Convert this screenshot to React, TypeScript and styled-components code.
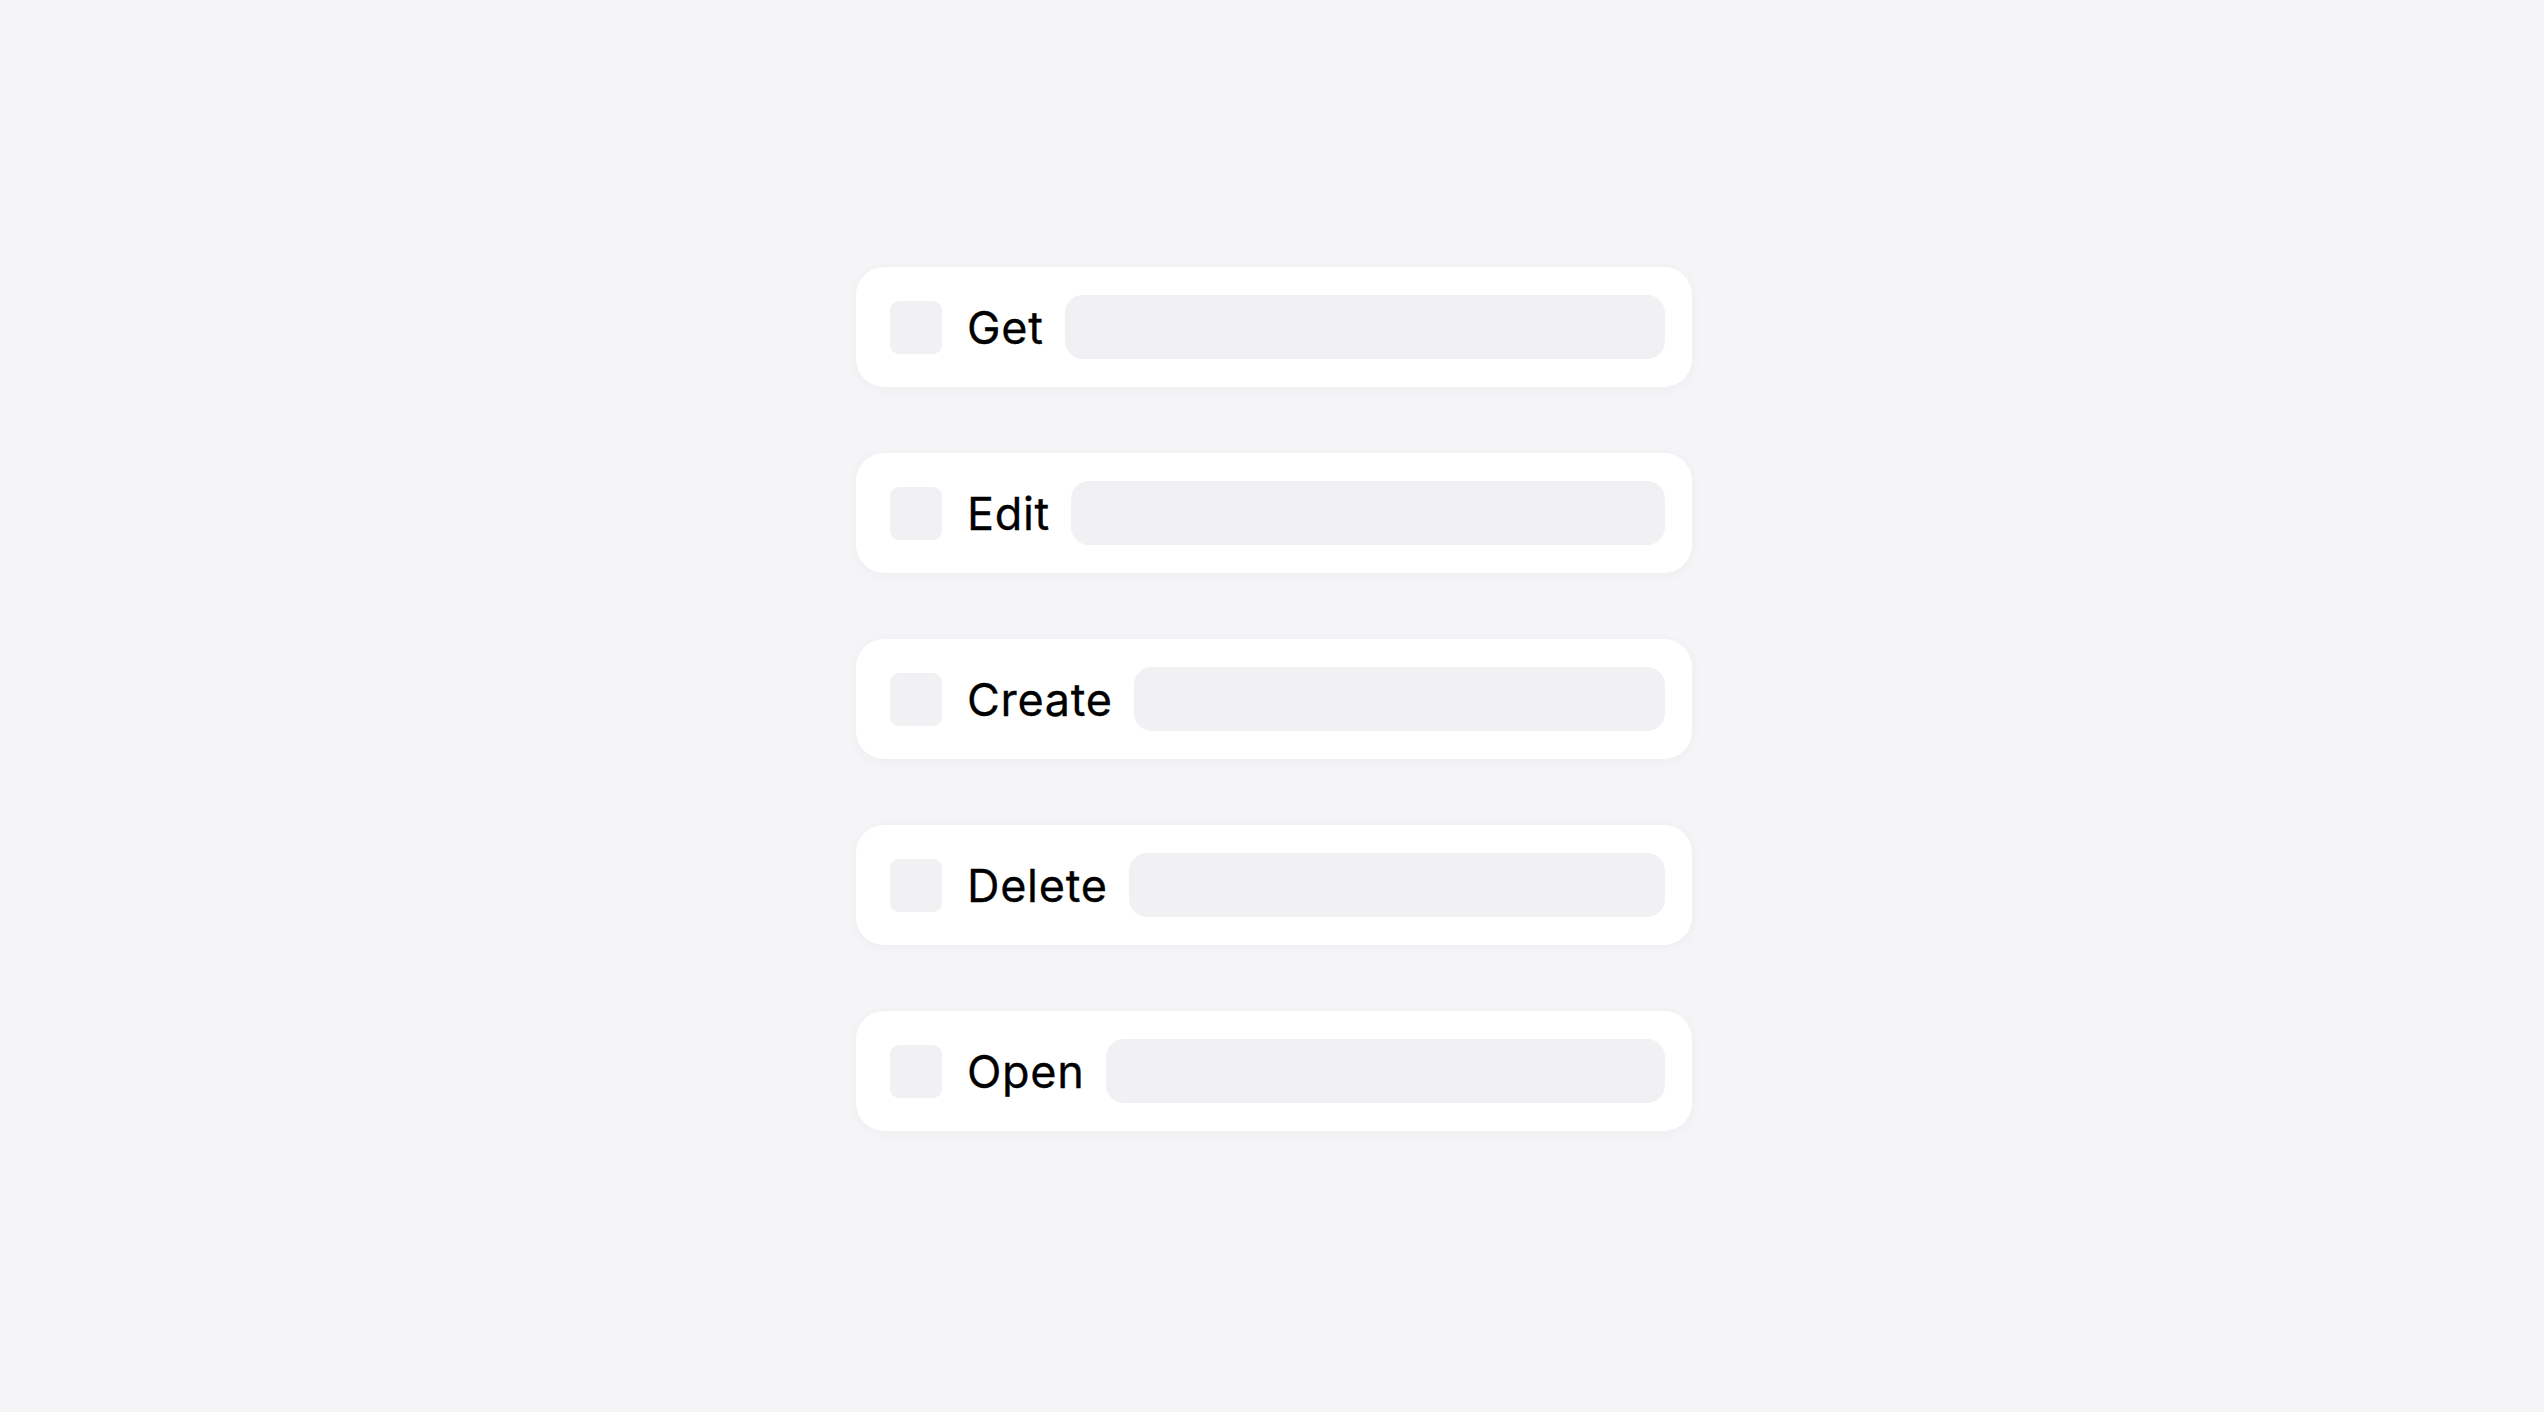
import React from 'react'
import styled, { createGlobalStyle } from 'styled-components'

const GlobalStyle = createGlobalStyle`
  html, body {
    margin: 0;
    padding: 0;
    background: #f5f5f7;
  }
  body {
    font-family: Inter, 'Liberation Sans', Arial, sans-serif;
  }
`

const Page = styled.div`
  width: 2544px;
  height: 1412px;
  display: flex;
  flex-direction: column;
  align-items: center;
  padding-top: 267px;
  padding-left: 4px;
  box-sizing: border-box;
  background: #f5f5f7;
`

const List = styled.div`
  display: flex;
  flex-direction: column;
  gap: 66px;
  width: 836px;
`

const Card = styled.div`
  display: flex;
  align-items: center;
  height: 120px;
  box-sizing: border-box;
  padding: 0 27px 0 34px;
  background: #ffffff;
  border-radius: 28px;
  box-shadow: 0 2px 14px rgba(0, 0, 0, 0.035);
`

const Check = styled.div`
  width: 52px;
  height: 53px;
  flex: none;
  border-radius: 9px;
  background: #f1f1f4;
`

const Label = styled.span`
  margin-left: 25px;
  font-size: 45px;
  font-weight: 400;
  color: #000;
  letter-spacing: 0.7px;
  -webkit-text-stroke: 0.3px #000;
`

const Field = styled.div`
  flex: 1;
  height: 64px;
  margin-left: 21px;
  border-radius: 18px;
  background: #f1f1f4;
`

const actions = ['Get', 'Edit', 'Create', 'Delete', 'Open']

export default function App() {
  return (
    <Page>
      <GlobalStyle />
      <List>
        {actions.map((a) => (
          <Card key={a}>
            <Check />
            <Label>{a}</Label>
            <Field />
          </Card>
        ))}
      </List>
    </Page>
  )
}
